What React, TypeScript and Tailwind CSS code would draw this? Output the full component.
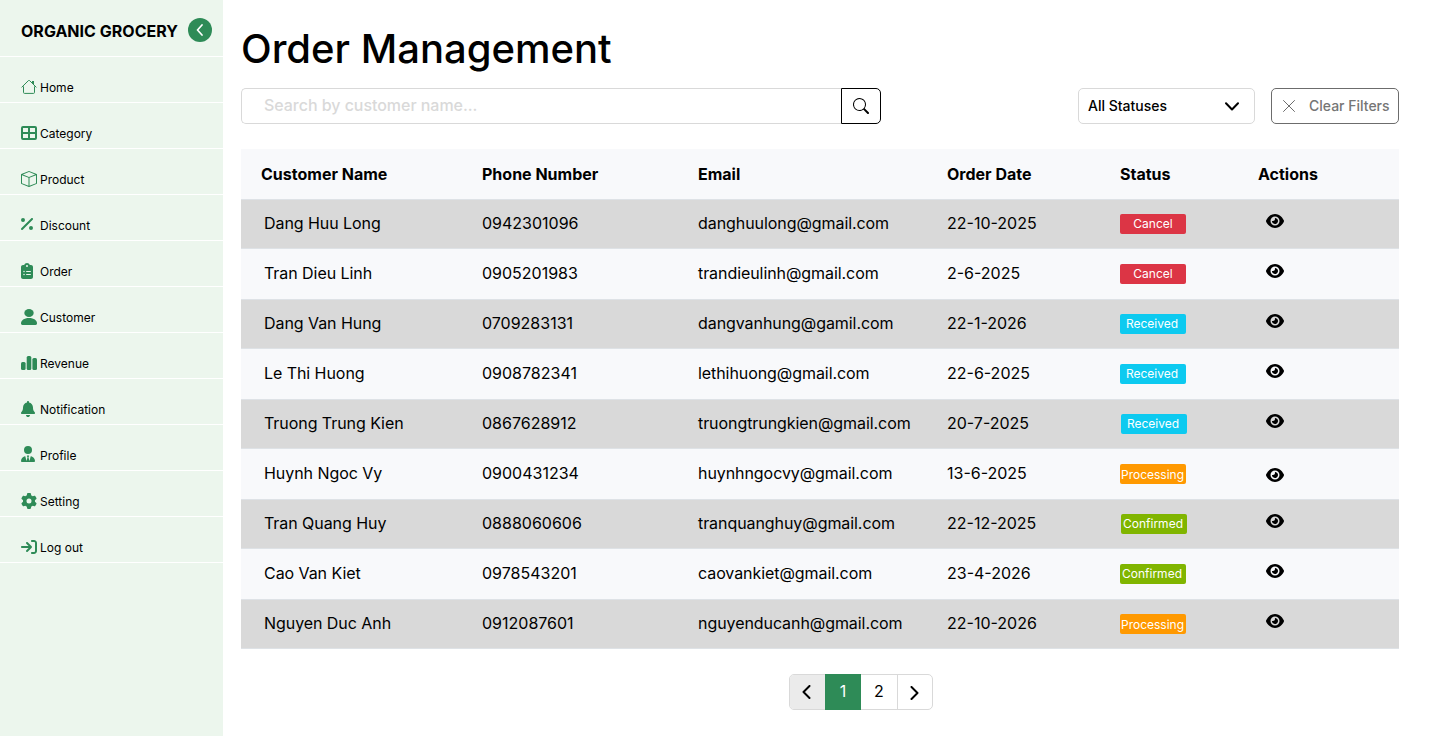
import React from "react";
import {
  FaPercent,
  FaClipboardList,
  FaBell,
  FaUserTie,
  FaGear,
  FaArrowRightToBracket,
  FaEye,
} from "react-icons/fa6";
import { BsBox, BsSearch } from "react-icons/bs";

const HouseIcon = () => (
  <svg width="16" height="16" viewBox="0 0 16 16" fill="none" stroke="#2e8b57">
    <path d="M2.500 7.4V13.400a1 1 0 0 0 1 1h9a1 1 0 0 0 1-1V7.400" />
    <path d="M.6 8.4 7.4 1.6a.85.85 0 0 1 1.2 0l6.8 6.8" strokeWidth="1" />
    <path d="M11 2h2v4l-2-2z" fill="#2e8b57" stroke="none" />
  </svg>
);

const GridIcon = () => (
  <svg width="16" height="14" viewBox="0 0 16 14" fill="none" stroke="#2e8b57" strokeWidth="2">
    <rect x="1" y="1" width="14" height="12" rx="1" />
    <path d="M8 1v12M1 7h14" />
  </svg>
);

const PersonIcon = () => (
  <svg width="16" height="16" viewBox="0 0 16 16" fill="#2e8b57">
    <ellipse cx="8" cy="4" rx="4.7" ry="4" />
    <path d="M0 14.6C0 11.5 3 9.1 8 9.1s8 2.4 8 5.5c0 .9-.5 1.4-1.4 1.4H1.4C.5 16 0 15.500 0 14.600z" />
  </svg>
);

const BarsIcon = () => (
  <svg width="16" height="14" viewBox="0 0 16 14" fill="#2e8b57">
    <rect x="0" y="6" width="4.600" height="8" rx="1.500" />
    <rect x="5.700" y="0" width="4.600" height="14" rx="1.500" />
    <rect x="11.400" y="2" width="4.600" height="12" rx="1.500" />
  </svg>
);

const navItems: { label: string; icon: React.ReactNode }[] = [
  { label: "Home", icon: <HouseIcon /> },
  { label: "Category", icon: <GridIcon /> },
  { label: "Product", icon: <BsBox size={16} /> },
  { label: "Discount", icon: <FaPercent className="h-4 w-3 -translate-y-px" /> },
  { label: "Order", icon: <FaClipboardList className="h-4 w-3" /> },
  { label: "Customer", icon: <PersonIcon /> },
  { label: "Revenue", icon: <BarsIcon /> },
  { label: "Notification", icon: <FaBell className="h-4 w-3.5" /> },
  { label: "Profile", icon: <FaUserTie className="h-4 w-3.5 -translate-y-px" /> },
  { label: "Setting", icon: <FaGear className="size-4" /> },
  { label: "Log out", icon: <FaArrowRightToBracket className="size-4" /> },
];

const statusColor = {
  Cancel: "bg-[#dc3545]",
  Received: "bg-[#0dcaf0]",
  Processing: "bg-[#ff9900]",
  Confirmed: "bg-[#80b500]",
};

type Order = {
  name: string;
  phone: string;
  email: string;
  date: string;
  status: keyof typeof statusColor;
  badge?: string;
  text?: string;
  eye?: string;
};

const orders: Order[] = [
  { name: "Dang Huu Long", phone: "0942301096", email: "danghuulong@gmail.com", date: "22-10-2025", status: "Cancel", text: "pl-0.5" },
  { name: "Tran Dieu Linh", phone: "0905201983", email: "trandieulinh@gmail.com", date: "2-6-2025", status: "Cancel", text: "pl-0.5" },
  { name: "Dang Van Hung", phone: "0709283131", email: "dangvanhung@gamil.com", date: "22-1-2026", status: "Received" },
  { name: "Le Thi Huong", phone: "0908782341", email: "lethihuong@gmail.com", date: "22-6-2025", status: "Received" },
  { name: "Truong Trung Kien", phone: "0867628912", email: "truongtrungkien@gmail.com", date: "20-7-2025", status: "Received", badge: "ml-px" },
  { name: "Huynh Ngoc Vy", phone: "0900431234", email: "huynhngocvy@gmail.com", date: "13-6-2025", status: "Processing", text: "pt-0.5 pl-px", eye: "pt-px" },
  { name: "Tran Quang Huy", phone: "0888060606", email: "tranquanghuy@gmail.com", date: "22-12-2025", status: "Confirmed", badge: "ml-px" },
  { name: "Cao Van Kiet", phone: "0978543201", email: "caovankiet@gmail.com", date: "23-4-2026", status: "Confirmed" },
  { name: "Nguyen Duc Anh", phone: "0912087601", email: "nguyenducanh@gmail.com", date: "22-10-2026", status: "Processing", text: "pt-0.5 pl-px" },
];

const columns = "grid grid-cols-[221px_216px_249px_173px_138px_1fr] items-center pl-5";

function Sidebar() {
  return (
    <aside className="h-full w-[223px] shrink-0 bg-[#ecf6ed]">
      <div className="flex h-[57px] items-start border-b border-white pl-[21px] pt-[18px]">
        <span className="w-[167px] whitespace-nowrap text-base leading-[26px] font-bold tracking-[0.02px]">ORGANIC GROCERY</span>
        <button className="flex size-6 items-center justify-center rounded-full bg-[#2e8b57]">
          <svg width="8" height="12" viewBox="0 0 8 12" fill="none" stroke="white" strokeWidth="1.7" strokeLinecap="round" strokeLinejoin="round">
            <path d="M6 1 1.500 6 6 11" />
          </svg>
        </button>
      </div>
      <nav>
        {navItems.map((item) => (
          <a key={item.label} className="flex h-[46px] items-end border-b border-white pb-[5px] pl-[21px]">
            <span className="flex h-5 w-[19px] shrink-0 items-center text-[#2e8b57]">{item.icon}</span>
            <span className="text-xs leading-[19px]">{item.label}</span>
          </a>
        ))}
      </nav>
    </aside>
  );
}

function Toolbar() {
  return (
    <div className="flex h-9 w-[1158px]">
      <div className="flex h-9 w-[600px] items-center rounded-l-[5px] border border-r-0 border-[#d9d9d9] pb-0.5 pl-[22px] text-base font-medium tracking-[-0.04px] text-[#d9d9d9]">
        Search by customer name...
      </div>
      <button className="flex h-9 w-10 items-center justify-center rounded-r-[5px] border border-black">
        <BsSearch size={16} />
      </button>
      <button className="ml-auto flex h-9 w-[177px] items-center justify-between rounded-[5px] border border-[#d9d9d9] pr-[15px] pl-[9px] text-sm font-medium">
        All Statuses
        <svg width="14" height="9" viewBox="0 0 14 9" fill="none" stroke="black" strokeWidth="2" strokeLinecap="round" strokeLinejoin="round">
          <path d="M1 1.300 7 7.500l6-6.200" />
        </svg>
      </button>
      <button className="ml-4 flex h-9 w-32 items-center rounded-[5px] border border-[#6c6c6c] pl-[11px] text-sm font-medium text-[#757575]">
        <svg width="12" height="12" viewBox="0 0 12 12" fill="none" stroke="#6c6c6c" strokeLinecap="round">
          <path d="M.5.5l11 11M11.500.5l-11 11" />
        </svg>
        <span className="ml-3.5 whitespace-nowrap">Clear Filters</span>
      </button>
    </div>
  );
}

function OrdersTable() {
  return (
    <section className="mt-[25px] w-[1158px]">
      <div className={`${columns} h-[50px] bg-[#f8f9fb] text-base font-bold`}>
        <span>Customer Name</span>
        <span>Phone Number</span>
        <span>Email</span>
        <span>Order Date</span>
        <span>Status</span>
        <span>Actions</span>
      </div>
      {orders.map((o, i) => (
        <div
          key={o.name}
          className={`${columns} h-[50px] text-base ${i % 2 === 0 ? "border-y border-[#dee2e6] bg-[#d9d9d9]" : "bg-[#f8f9fb]"}`}
        >
          <span className="pb-0.5 pl-[3px] tracking-[-0.06px]">{o.name}</span>
          <span className="pb-0.5">{o.phone}</span>
          <span className="pb-0.5 tracking-[-0.07px]">{o.email}</span>
          <span className="pb-0.5">{o.date}</span>
          <span className={`flex h-5 w-[66px] items-center justify-center rounded-[2px] text-xs text-white ${statusColor[o.status]} ${o.badge ?? ""}`}>
            <span className={`-ml-0.5 ${o.text ?? ""}`}>{o.status}</span>
          </span>
          <span className={`pl-2 ${o.eye ?? "pb-[7px]"}`}>
            <FaEye className="h-4 w-[18px]" />
          </span>
        </div>
      ))}
    </section>
  );
}

function Pagination() {
  return (
    <div className="mt-[25px] ml-[548px] flex h-9 w-36 rounded-[5px] border border-[#d9d9d9] text-base">
      <button className="flex w-[35px] items-center justify-center rounded-l-[4px] bg-[#ebebeb] pr-0.5">
        <svg width="9" height="14" viewBox="0 0 9 14" fill="none" stroke="black" strokeWidth="2" strokeLinecap="round" strokeLinejoin="round">
          <path d="M7.500 1 1.500 7l6 6" />
        </svg>
      </button>
      <button className="-my-px w-9 bg-[#2e8b57] pb-0.5 text-white">1</button>
      <button className="w-9 pb-0.5">2</button>
      <button className="flex flex-1 items-center justify-center border-l border-[#d9d9d9] pt-0.5 pr-px">
        <svg width="9" height="14" viewBox="0 0 9 14" fill="none" stroke="black" strokeWidth="2" strokeLinecap="round" strokeLinejoin="round">
          <path d="M1.500 1l6 6-6 6" />
        </svg>
      </button>
    </div>
  );
}

export default function App() {
  return (
    <div className="flex h-[736px] w-[1440px] overflow-hidden bg-white font-['Inter',sans-serif] text-black">
      <Sidebar />
      <main className="flex-1 pl-[18px]">
        <h1 className="h-[88px] pt-[25px] text-[40px] leading-[48px] font-medium">Order Management</h1>
        <Toolbar />
        <OrdersTable />
        <Pagination />
      </main>
    </div>
  );
}
